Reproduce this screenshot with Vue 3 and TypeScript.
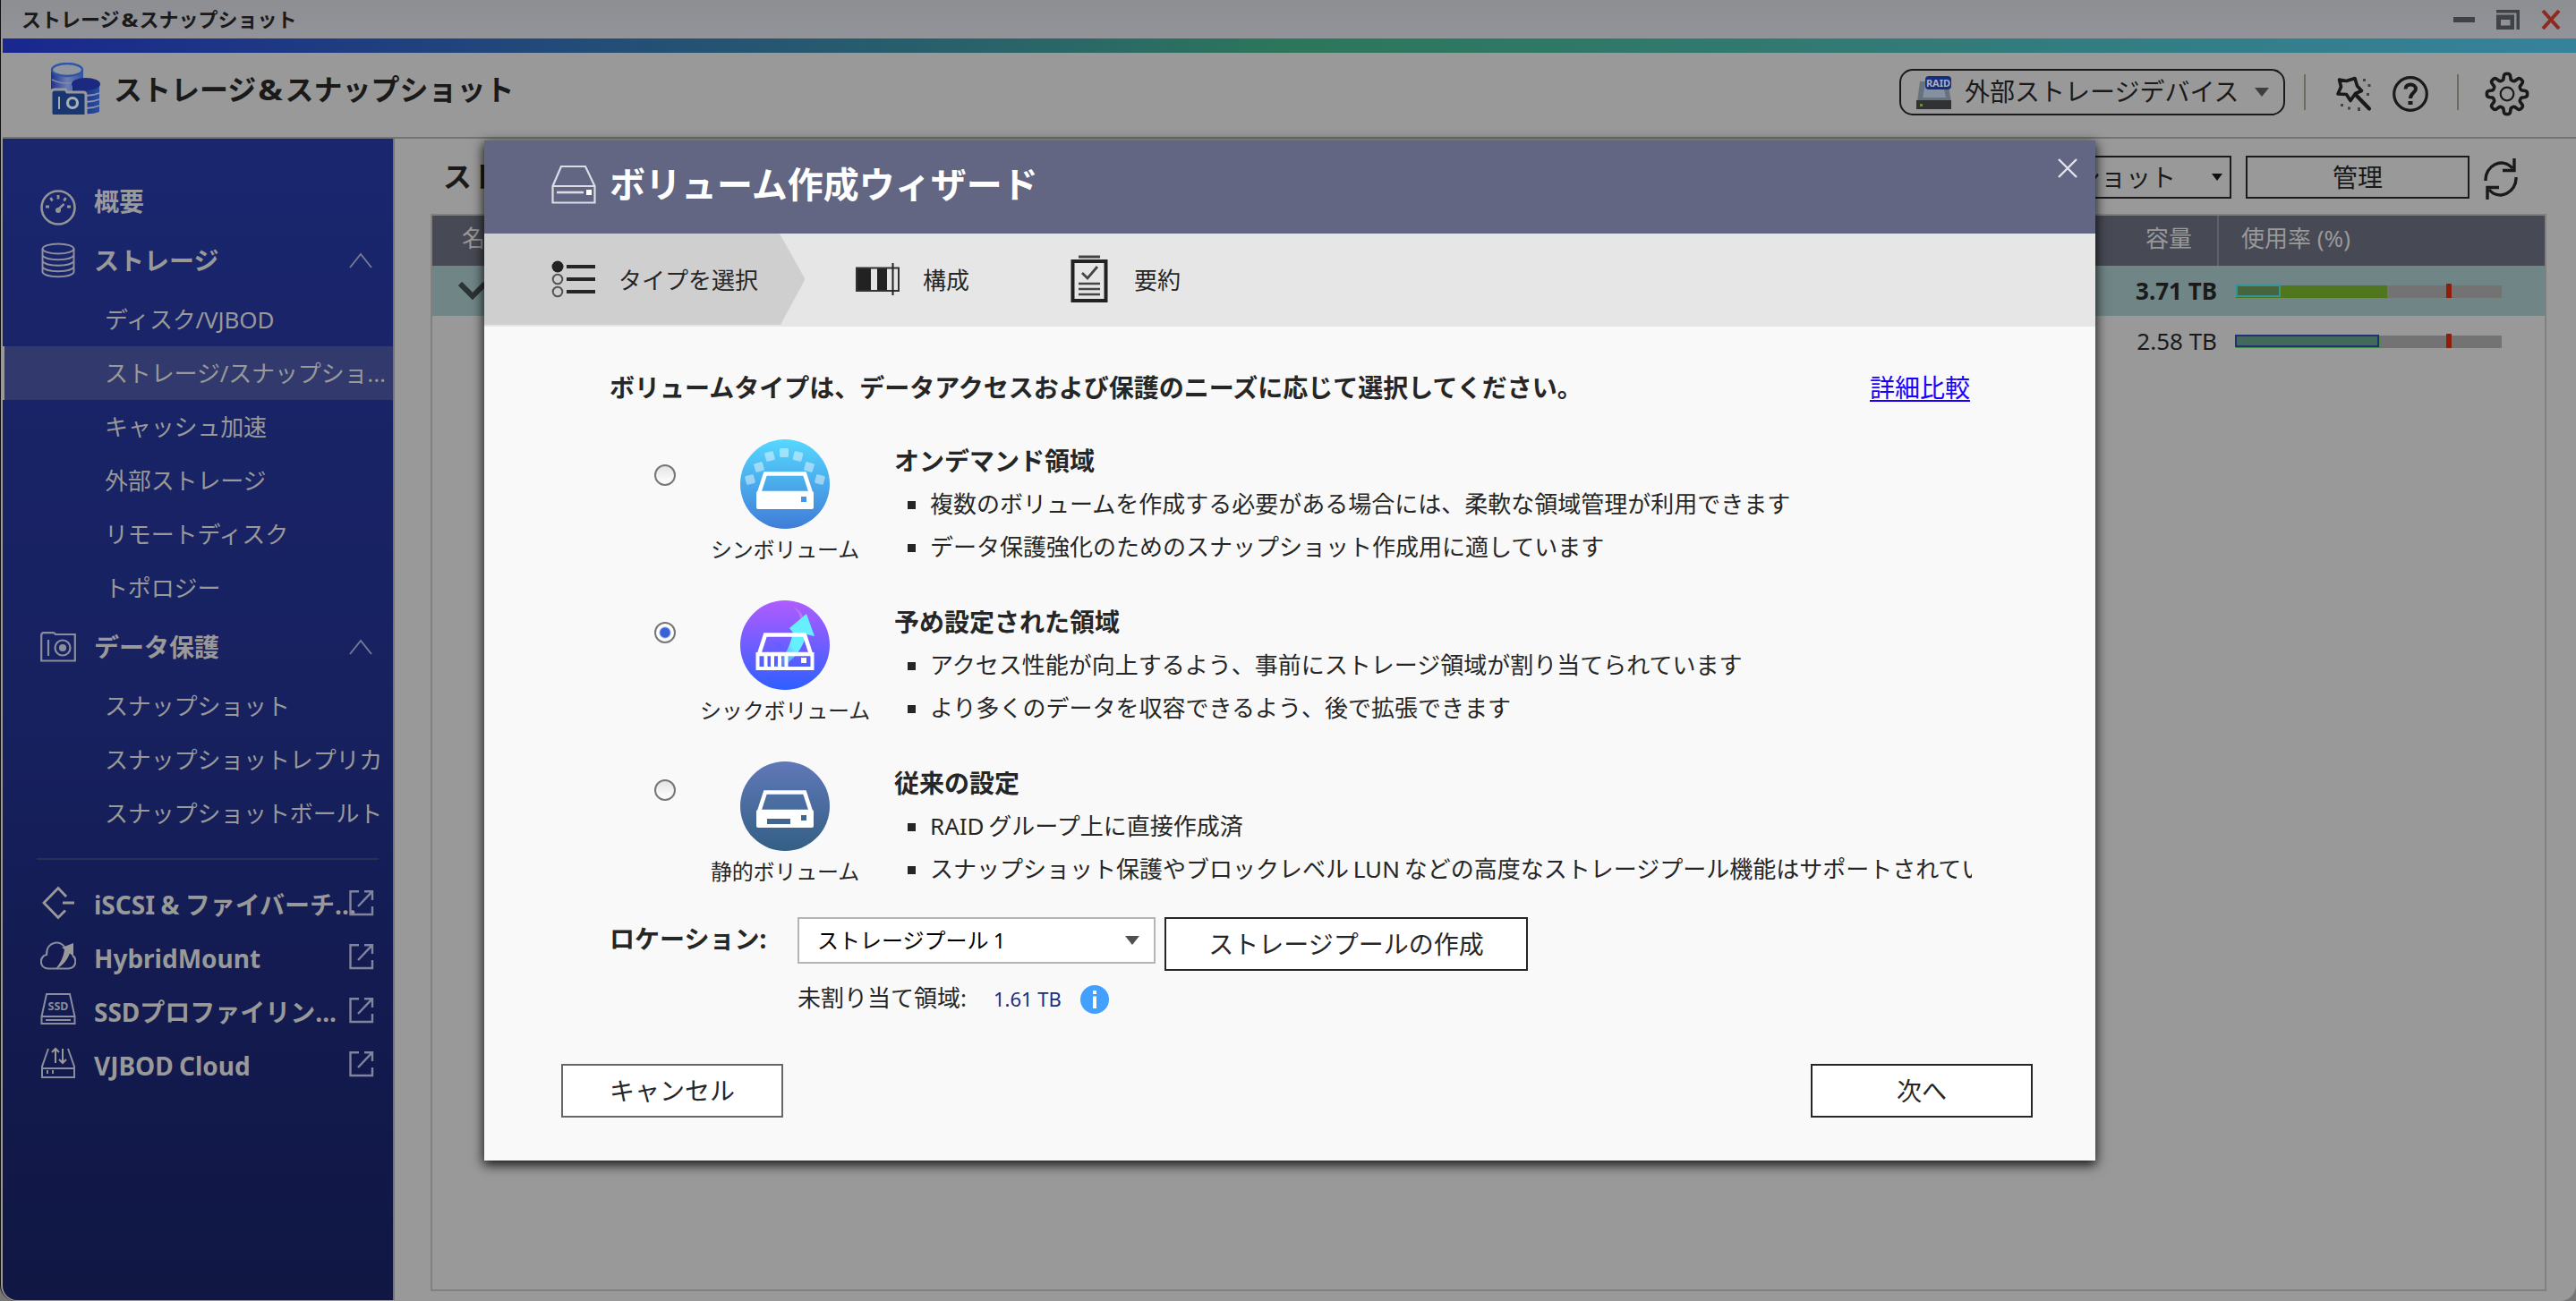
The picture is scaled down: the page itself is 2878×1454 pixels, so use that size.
<script setup lang="ts">
interface SubItem { label: string; active?: boolean }
interface LinkItem { label: string; icon: 'iscsi' | 'hybrid' | 'ssd' | 'vjbod' }
interface VolumeOption {
  kind: 'thin' | 'thick' | 'static'
  label: string
  title: string
  points: string[]
  checked: boolean
}

const storageItems: SubItem[] = [
  { label: 'ディスク/VJBOD' },
  { label: 'ストレージ/スナップショ...', active: true },
  { label: 'キャッシュ加速' },
  { label: '外部ストレージ' },
  { label: 'リモートディスク' },
  { label: 'トポロジー' },
]
const protectItems: SubItem[] = [
  { label: 'スナップショット' },
  { label: 'スナップショットレプリカ' },
  { label: 'スナップショットボールト' },
]
const links: LinkItem[] = [
  { label: 'iSCSI & ファイバーチ...', icon: 'iscsi' },
  { label: 'HybridMount', icon: 'hybrid' },
  { label: 'SSDプロファイリン...', icon: 'ssd' },
  { label: 'VJBOD Cloud', icon: 'vjbod' },
]
const options: VolumeOption[] = [
  {
    kind: 'thin',
    label: 'シンボリューム',
    title: 'オンデマンド領域',
    points: [
      '複数のボリュームを作成する必要がある場合には、柔軟な領域管理が利用できます',
      'データ保護強化のためのスナップショット作成用に適しています',
    ],
    checked: false,
  },
  {
    kind: 'thick',
    label: 'シックボリューム',
    title: '予め設定された領域',
    points: [
      'アクセス性能が向上するよう、事前にストレージ領域が割り当てられています',
      'より多くのデータを収容できるよう、後で拡張できます',
    ],
    checked: true,
  },
  {
    kind: 'static',
    label: '静的ボリューム',
    title: '従来の設定',
    points: [
      'RAID グループ上に直接作成済',
      'スナップショット保護やブロックレベル LUN などの高度なストレージプール機能はサポートされていません',
    ],
    checked: false,
  },
]

function gear(cx: number, cy: number): string {
  const pts: string[] = []
  for (let i = 0; i < 160; i++) {
    const a = (i / 160) * Math.PI * 2
    const c = Math.cos(8 * a)
    const r = 19.3 + 3.3 * Math.tanh(c * 2.2) / Math.tanh(2.2)
    pts.push(`${(cx + r * Math.sin(a)).toFixed(2)} ${(cy - r * Math.cos(a)).toFixed(2)}`)
  }
  return `M${pts.join('L')}Z`
}
const gearPath = gear(25, 25)
// centre x, centre y and tilt of each block in the arc
const dots = [
  [11, 45, -15], [21, 31, -17], [33, 19, -15], [49, 15, 0], [64.5, 19, 15], [77, 31, 17], [89, 45, 15],
]
</script>

<template>
  <div class="window">
    <header class="titlebar">
      <span class="tb-text">ストレージ<span class="amp">&amp;</span>スナップショット</span>
      <span class="tb-ctl">
        <svg width="24" height="22" viewBox="0 0 24 22"><path d="M0 8H24V14H0Z" fill="#3f4347" /></svg>
        <svg width="26" height="22" viewBox="0 0 26 22">
          <path d="M0 0H26V22H22.5V3.5H0Z" fill="#3f4347" /><path d="M0 5.5H20V22H0ZM5 11V17.500H15.500V11Z" fill="#3f4347" fill-rule="evenodd" />
        </svg>
        <svg width="22" height="22" viewBox="0 0 22 22"><path d="M2 1L20 21M20 1L2 21" stroke="#8e2a20" stroke-width="4" /></svg>
      </span>
    </header>
    <div class="rainbow"></div>

    <div class="apphead">
      <svg class="logo" width="56" height="58" viewBox="0 0 56 58">
        <defs>
          <linearGradient id="cyl" x1="0" y1="0" x2="1" y2="0"><stop offset="0" stop-color="#1c3090" /><stop offset=".5" stop-color="#6c7db0" /><stop offset="1" stop-color="#2f52a0" /></linearGradient>
          <linearGradient id="cyl2" x1="0" y1="0" x2="1" y2="0"><stop offset="0" stop-color="#16266f" /><stop offset="1" stop-color="#2b4da0" /></linearGradient>
        </defs>
        <path d="M1 8V32Q18 40 37 32V8Z" fill="url(#cyl)" />
        <path d="M2 19Q18 27 36 19" fill="none" stroke="#7c88b0" stroke-width="1.6" />
        <ellipse cx="19" cy="8" rx="17" ry="7" fill="#8f969f" stroke="#2d57a6" stroke-width="2.4" />
        <path d="M25 24V54Q42 60 55 55V24Z" fill="url(#cyl2)" />
        <ellipse cx="40" cy="24" rx="16" ry="7" fill="#1b2a80" />
        <path d="M40 37Q48 37 55 34M40 44Q48 44 55 41M40 51Q48 51 55 48" fill="none" stroke="#8a94b4" stroke-width="1.8" />
        <path d="M1 57V34Q1 30 5 30H17L19 33H37Q40 33 40 36V58" fill="#173672" stroke="#999" stroke-width="3" />
        <path d="M3 32H16L18 35H37V58H3Z" fill="#173672" />
        <path d="M10 38V52" stroke="#a9a99f" stroke-width="2" />
        <circle cx="25" cy="45" r="5.500" fill="none" stroke="#a9b0b5" stroke-width="3.200" />
      </svg>
      <h1>ストレージ<span class="amp">&amp;</span>スナップショット</h1>
      <div class="pill">
        <svg width="40" height="38" viewBox="0 0 40 38">
          <path d="M4 7H35L39 30H1Z" fill="#68727c" /><path d="M10 10H30L33 25H7Z" fill="#8591a0" />
          <path d="M0 28H39V38H0Z" fill="#303234" /><path d="M4 32H7V35H4Z" fill="#5c9a12" />
          <rect x="10" y="1" width="29" height="15" rx="4" fill="#152f7c" />
          <text x="24.500" y="12.500" font-size="11" font-weight="700" font-family="Noto Sans, sans-serif" text-anchor="middle" fill="#a9b2c4">RAID</text>
        </svg>
        <span>外部ストレージデバイス</span>
        <svg class="caret" width="16" height="10" viewBox="0 0 16 10"><path d="M0 0H16L8 10Z" fill="#3e3e3e" /></svg>
      </div>
      <i class="vsep s1"></i>
      <svg class="wand" width="42" height="42" viewBox="0 0 42 42">
        <path d="M22 3.500L24.500 12L29.500 17.500L22.500 20.500L17 28.500L12.500 21.500L3 21L6.500 13L4.500 5L12.500 6.500Z" fill="none" stroke="#1a1a1a" stroke-width="3.600" stroke-linejoin="round" />
        <path d="M23 22L38 37.500" stroke="#1a1a1a" stroke-width="4.200" stroke-linecap="round" />
        <g fill="#444"><rect x="31" y="4" width="3" height="3" /><rect x="36.500" y="10" width="3" height="3" /><rect x="35" y="20" width="3" height="3" /><rect x="6" y="32" width="3" height="3" /><rect x="14" y="35.500" width="3" height="3" /><rect x="25" y="36" width="3" height="4" /></g>
      </svg>
      <svg class="help" width="40" height="40" viewBox="0 0 40 40">
        <circle cx="20" cy="20" r="18.300" fill="none" stroke="#1a1a1a" stroke-width="3.200" />
        <path d="M14.500 14.500C14.500 7.500 26 8 26 14.500C26 18.500 20 19 20 25" fill="none" stroke="#1a1a1a" stroke-width="4" /><path d="M17.500 28H22.500V32H17.500Z" fill="#1a1a1a" />
      </svg>
      <i class="vsep s2"></i>
      <svg class="gear" width="50" height="50" viewBox="0 0 50 50">
        <path :d="gearPath" fill="none" stroke="#1a1a1a" stroke-width="3.600" stroke-linejoin="round" />
        <circle cx="25" cy="25" r="7.300" fill="none" stroke="#1a1a1a" stroke-width="2.200" />
      </svg>
    </div>

    <div class="main">
      <nav class="side">
        <div class="head top">
          <svg width="40" height="42" viewBox="0 0 40 42" fill="none" stroke="#949494">
            <circle cx="20" cy="21" r="18.500" stroke-width="2.600" />
            <path d="M20 23L26.500 17" stroke-width="2.400" /><circle cx="20" cy="24" r="3" fill="#949494" stroke="none" />
            <g stroke-width="2.800"><path d="M20 7V11.500M11.500 10L13.500 13.500M28.500 10L26.500 13.500M6 20H10M30 20H34" /></g>
          </svg>
          <b>概要</b>
        </div>
        <div class="head">
          <svg width="40" height="40" viewBox="0 0 40 40" fill="none" stroke="#8f9099" stroke-width="2">
            <ellipse cx="20" cy="7" rx="17.500" ry="5.500" /><path d="M2.500 7V33C5 40 35 40 37.500 33V7M2.500 14C5 21 35 21 37.500 14M2.500 20.500C5 27.500 35 27.500 37.500 20.500M2.500 27C5 34 35 34 37.500 27" />
          </svg>
          <b>ストレージ</b>
          <svg class="chev" width="26" height="18" viewBox="0 0 26 18"><path d="M1 17L13 2L25 17" fill="none" stroke="#757994" stroke-width="2" /></svg>
        </div>
        <div v-for="s in storageItems" :key="s.label" class="sub" :class="{ active: s.active }">{{ s.label }}</div>
        <div class="head">
          <svg width="40" height="34" viewBox="0 0 40 34" fill="none" stroke="#8a8d9c" stroke-width="2.200">
            <path d="M1.200 32.500V4Q1.200 1.200 4 1.200H14Q16 1.200 17 3H38.800V32.500Z" /><path d="M9 9V27" /><circle cx="25" cy="18" r="8.500" /><circle cx="25" cy="18" r="3" fill="#8a8d9c" />
          </svg>
          <b>データ保護</b>
          <svg class="chev" width="26" height="18" viewBox="0 0 26 18"><path d="M1 17L13 2L25 17" fill="none" stroke="#757994" stroke-width="2" /></svg>
        </div>
        <div v-for="s in protectItems" :key="s.label" class="sub">{{ s.label }}</div>
        <div class="divider"></div>
        <div v-for="l in links" :key="l.label" class="link">
          <svg width="40" height="40" viewBox="0 0 40 40" fill="none" stroke="#8a8d9c" stroke-width="2">
            <g v-if="l.icon === 'iscsi'" stroke="#999" stroke-width="2.800"><path d="M29 13L20 3.500L4 20L20 36.500L28 28.500M25 20H38" /></g>
            <g v-else-if="l.icon === 'hybrid'">
              <path d="M9 33.500C-2 33 -1 19 7 18C7 2 24 1 28 11M9 33.500H31C41 33 41 22 36 19" stroke-width="2.200" /><path d="M37 5V20L33 16.500C30 24 25 31 17 34C22 28 26 21 27 12L24 10Z" fill="#999" stroke="none" />
            </g>
            <g v-else-if="l.icon === 'ssd'">
              <path d="M7 2H33L38.500 27V35H1.500V27ZM2 27H38M6 31H34" /><text x="20" y="19.500" font-size="12.500" font-weight="700" font-family="Noto Sans, sans-serif" text-anchor="middle" fill="#8a8d9c" stroke="none">SSD</text>
            </g>
            <g v-else>
              <path d="M9 3L2 23V35H38V23L31 3M2 25H38" /><path d="M17 19V3M13 7L17 3L21 7M25 3V19M21 15L25 19L29 15" stroke="#999" /><path d="M7 29H9M13 29H15" stroke-width="4" />
            </g>
          </svg>
          <b>{{ l.label }}</b>
          <svg class="ext" width="28" height="30" viewBox="0 0 28 30" fill="none" stroke="#80849c" stroke-width="2.400"><path d="M11 2.200H1.500V28H26V19M17 2.200H26V12M26 2.200L10 19" /></svg>
        </div>
      </nav>

      <section class="content">
        <div class="toolbar">
          <h2>ストレージ/スナップショット</h2>
          <button class="btn snap">スナップショット<svg width="12" height="8" viewBox="0 0 12 8"><path d="M0 0H12L6 8Z" fill="#111" /></svg></button>
          <button class="btn manage">管理</button>
          <svg class="refresh" width="38" height="46" viewBox="0 0 38 46" fill="none" stroke="#1a1a1a" stroke-width="3.400">
            <path d="M2 25C1 8 21 -2 32 11M34 0V13.500H21M36 21C37 38 17 48 6 35M4 46V32.500H17" />
          </svg>
        </div>
        <div class="table">
          <div class="tr th"><span class="name">名前</span><span class="cap">容量</span><span class="use">使用率 (%)</span></div>
          <div class="tr sel">
            <span class="name"><svg width="32" height="20" viewBox="0 0 32 20"><path d="M2 2L16 16L30 2" fill="none" stroke="#2c3333" stroke-width="6" /></svg></span>
            <span class="cap"><b>3.71 TB</b></span>
            <span class="use"><i class="bar g1"><i class="fill"></i><i class="box"></i><i class="tick"></i></i></span>
          </div>
          <div class="tr">
            <span class="name"></span><span class="cap">2.58 TB</span>
            <span class="use"><i class="bar g2"><i class="fill"></i><i class="box"></i><i class="tick"></i></i></span>
          </div>
        </div>
      </section>
    </div>

    <div class="modal">
      <div class="mhead">
        <svg width="50" height="44" viewBox="0 0 50 44" fill="none" stroke="#dcdde4" stroke-width="2.200">
          <path d="M1.500 24L11 2H38L48.500 24V42.500H1.500ZM1.500 24H48.500" /><path d="M6 31H36" stroke-width="2.600" /><path d="M39 28H45V34H39Z" fill="#fff" stroke="none" />
        </svg>
        <h3>ボリューム作成ウィザード</h3>
        <svg class="x" width="22" height="22" viewBox="0 0 22 22"><path d="M1 1L21 21M21 1L1 21" stroke="#e3e4ea" stroke-width="2.400" /></svg>
      </div>
      <div class="steps">
        <div class="step one">
          <svg width="50" height="42" viewBox="0 0 50 42"><circle cx="7" cy="7" r="6.500" fill="#222" /><g fill="none" stroke="#555" stroke-width="2"><circle cx="7" cy="21" r="5.300" /><circle cx="7" cy="35" r="5.300" /></g><path d="M17 7H49M17 21H49M17 35H49" stroke="#262626" stroke-width="4" /></svg>
          <span>タイプを選択</span>
        </div>
        <svg class="tip" width="30" height="102" viewBox="0 0 30 102"><path d="M0 0L28.500 51L1 102H0Z" fill="#cfcfcf" /></svg>
        <div class="step two">
          <svg width="50" height="36" viewBox="0 0 50 36"><path d="M0 5H17V31H0ZM24 5H35V31H24Z" fill="#222" /><path d="M1 5.500H48V31H1Z" fill="none" stroke="#333" stroke-width="2" /><path d="M41.500 0V36" stroke="#222" stroke-width="2" /></svg>
          <span>構成</span>
        </div>
        <div class="step three">
          <svg width="42" height="54" viewBox="0 0 42 54" fill="none"><path d="M9 2H33" stroke="#444" stroke-width="3" /><path d="M2.500 7H39.500V51H2.500Z" stroke="#222" stroke-width="4" /><path d="M13 20L19 26L30 13" stroke="#444" stroke-width="2.800" /><path d="M9 32H33M9 38H33M9 44H33" stroke="#444" stroke-width="2.500" /></svg>
          <span>要約</span>
        </div>
      </div>
      <div class="mbody">
        <div class="intro">
          <b>ボリュームタイプは、データアクセスおよび保護のニーズに応じて選択してください。</b>
          <a>詳細比較</a>
        </div>
        <div v-for="(o, i) in options" :key="o.kind" class="opt">
          <span class="radio" :class="['r' + i, { on: o.checked }]"></span>
          <div class="pic">
            <svg width="100" height="100" viewBox="0 0 100 100">
              <defs>
                <linearGradient id="gthin" x1="0" y1="0" x2="0" y2="1"><stop offset="0" stop-color="#55d8ff" /><stop offset="1" stop-color="#407dd8" /></linearGradient>
                <linearGradient id="gthick" x1="0" y1="0" x2="0" y2="1"><stop offset="0" stop-color="#b05cff" /><stop offset="1" stop-color="#2f5fff" /></linearGradient>
                <linearGradient id="gstatic" x1="0" y1="0" x2="0" y2="1"><stop offset="0" stop-color="#6078b8" /><stop offset="1" stop-color="#335f85" /></linearGradient>
                <linearGradient id="garrow" x1="1" y1="0" x2="0" y2="1"><stop offset="0.450" stop-color="#66f0ff" /><stop offset="0.900" stop-color="#5a60ff" stop-opacity="0.200" /></linearGradient>
              </defs>
              <circle cx="50" cy="50" r="50" :fill="`url(#g${o.kind})`" />
              <template v-if="o.kind === 'thin'">
                <rect v-for="(d, n) in dots" :key="n" :x="d[0] - 5" :y="d[1] - 5" width="10" height="10" rx="1.500" fill="#fff" fill-opacity=".45" :transform="`rotate(${d[2]} ${d[0]} ${d[1]})`" />
              </template>
              <template v-if="o.kind === 'thick'">
                <path d="M59 7Q72 18 65 35L70 30Q74 14 59 7Z" fill="#d080ff" opacity=".6" />
                <path d="M18 84C42 76 53 62 59 36L55 31L74 15L83 40L74 38C68 60 50 80 18 84Z" fill="url(#garrow)" />
                <path d="M35 46L50 58L44 46Z" fill="#5a60ff" opacity=".6" />
              </template>
              <g :transform="o.kind === 'static' ? 'translate(0 -4)' : ''">
                <path d="M28 38.500H72L79 60H21Z" fill="none" stroke="#fff" stroke-width="4.500" />
                <path v-if="o.kind === 'thick'" d="M19.500 60H80.500V76H19.500Z" fill="none" stroke="#fff" stroke-width="4" />
                <path v-if="o.kind === 'thick'" d="M28.500 62V74M36 62V74M44 62V74M51.500 62V74" stroke="#fff" stroke-width="4" />
                <path v-if="o.kind === 'thick'" d="M68 64H74V70H68Z" fill="#fff" />
                <rect v-if="o.kind !== 'thick'" x="18" y="58" width="64" height="20" rx="2" fill="#fff" />
                <path v-if="o.kind !== 'thick'" d="M68 64H74V70H68Z" :fill="o.kind === 'thin' ? '#4497e0' : '#42658f'" />
                <path v-if="o.kind === 'static'" d="M30 68H56V74H30Z" fill="#42658f" />
              </g>
            </svg>
            <span>{{ o.label }}</span>
          </div>
          <div class="txt">
            <b>{{ o.title }}</b>
            <p v-for="p in o.points" :key="p"><i></i>{{ p }}</p>
          </div>
        </div>
        <div class="loc">
          <b>ロケーション:</b>
          <div class="select"><span>ストレージプール 1</span><svg width="16" height="10" viewBox="0 0 16 10"><path d="M0 0H16L8 10Z" fill="#505050" /></svg></div>
          <button class="mbtn create">ストレージプールの作成</button>
        </div>
        <div class="free">
          <span>未割り当て領域:</span><em>1.61 TB</em>
          <svg width="32" height="32" viewBox="0 0 32 32"><circle cx="16" cy="16" r="16" fill="#42a0ff" /><path d="M14 6H18V10H14ZM14 12.500H18V26H14Z" fill="#fff" /></svg>
        </div>
        <div class="foot">
          <button class="mbtn cancel">キャンセル</button>
          <button class="mbtn next">次へ</button>
        </div>
      </div>
    </div>
  </div>
</template>

<style>
html, body { background: #777; }
</style>

<style scoped>
* { box-sizing: border-box; }
.window {
  position: relative; width: 2878px; height: 1454px; overflow: hidden; display: flex; flex-direction: column;
  padding: 0 0 1px 2px; background: #999; border-left: 1px solid #111; border-radius: 0 0 18px 18px;
  font-family: "Noto Sans", "Noto Sans CJK JP", sans-serif; color: #1a1a1a; font-size: 26px;
}
.window svg { flex: none; display: block; }
h1, h2, h3, p { margin: 0; }
button { font-family: inherit; color: inherit; padding: 0; }
.amp { display: inline-block; width: 1em; text-align: center; transform: scaleX(1.15); }
.titlebar { height: 43px; margin-left: -2px; background: linear-gradient(#8c8e92, #929499); display: flex; justify-content: space-between; padding: 0 17px 0 23px; }
.tb-text { font-size: 22px; font-weight: 700; line-height: 42px; }
.tb-ctl { display: flex; gap: 24px; padding-top: 11px; }
.rainbow { height: 16px; background: linear-gradient(90deg, #19278f, #234b78 22%, #2b6866 42%, #2c775b 50%, #327a74 72%, #35829c); }
.apphead { height: 96px; border-bottom: 2px solid #737373; display: flex; align-items: flex-start; padding-left: 53px; }
.logo { margin-top: 11px; }
h1 { font-size: 32px; line-height: 46px; margin: 18px 0 0 15px; width: 1995px; }
.pill { width: 431px; height: 52px; margin-top: 18px; border: 2px solid #1a1a1a; border-radius: 15px; display: flex; align-items: center; padding-left: 17px; font-size: 28px; }
.pill span { margin-left: 14px; line-height: 44px; margin-bottom: 2px; white-space: nowrap; }
.caret { margin-left: 17px; }
.vsep { width: 2px; height: 40px; margin-top: 24px; background: #6e6a60; }
.s1 { margin-left: 21px; }
.wand { margin: 25px 0 0 33px; }
.help { margin: 26px 0 0 22px; }
.s2 { margin-left: 32px; }
.gear { margin: 21px 0 0 29px; }

.main { flex: 1; display: flex; min-height: 0; }
.side { width: 438px; flex: none; border-right: 2px solid #777; color: #999; background: linear-gradient(#1a266e, #17215f 50%, #131b51 72%, #101743); border-radius: 0 0 0 16px; }
.head { height: 72px; display: flex; align-items: center; padding: 0 23px 0 42px; }
.head b { font-size: 28px; line-height: 40px; margin-left: 20px; }
.head.top { height: 60px; margin-top: 40px; padding-top: 13px; }
.head.top b { margin-top: -13px; }
.chev { margin-left: auto; }
.sub { height: 60px; line-height: 60px; padding-left: 114px; font-size: 26px; letter-spacing: -.15px; white-space: nowrap; overflow: hidden; }
.sub.active { background: #323a6d; border-left: 2px solid #999; padding-left: 112px; }
.divider { height: 2px; background: #2a3055; margin: 20px 16px 18px 38px; }
.link { height: 60px; display: flex; align-items: center; padding: 0 21px 0 42px; white-space: nowrap; }
.link b { font-size: 28px; line-height: 40px; margin: 4px 0 0 20px; width: 285px; word-spacing: -1px; }

.content { flex: 1; padding: 0 33px 10px 40px; display: flex; flex-direction: column; }
.toolbar { height: 84px; display: flex; padding-top: 19px; }
h2 { font-size: 32px; line-height: 48px; margin: -1px 0 0 14px; width: 1698px; }
.btn { height: 48px; border: 2px solid #1a1a1a; background: #999; font-size: 28px; line-height: 42px; border-radius: 0; }
.snap { width: 300px; display: flex; align-items: center; justify-content: flex-end; padding-right: 8px; white-space: nowrap; }
.snap svg { margin-left: 40px; }
.manage { width: 250px; margin-left: 16px; }
.refresh { margin: 3px 0 0 16px; }
.table { flex: 1; border: 2px solid #808080; }
.tr { height: 56px; display: flex; align-items: center; }
.name { width: 1876px; padding-left: 33px; }
.cap { width: 118px; text-align: right; white-space: nowrap; line-height: 56px; }
.use { flex: 1; padding-left: 21px; }
.th { background: #474954; color: #999; line-height: 50px; align-items: flex-start; }
.th .cap { height: 56px; line-height: 50px; padding-right: 28px; border-right: 2px solid #5f616c; width: 120px; }
.th .use { padding-left: 25px; }
.sel { background: #708586; }
.sel .name { padding-left: 29px; }
.bar { position: relative; top: 1px; display: block; width: 297px; height: 14px; background: #737373; }
.bar i { position: absolute; display: block; }
.bar .tick { left: 235px; top: -2px; width: 6px; height: 16px; background: #8f1d0b; }
.g1 .fill { width: 169px; height: 14px; background: #50761e; }
.g1 .box { top: -1px; width: 50px; height: 14px; background: #48643f; border: 2px solid #30959a; }
.g2 .fill { width: 161px; height: 14px; background: #3f8a43; }
.g2 .box { top: -1px; left: -1px; width: 161px; height: 14px; background: #43695a; border: 2px solid #232f78; }

.modal { position: absolute; left: 540px; top: 157px; width: 1800px; height: 1140px; background: #f9f9f9; color: #262626; box-shadow: 0 4px 12px 1px rgba(0, 0, 0, .85); display: flex; flex-direction: column; }
.mhead { height: 104px; background: #626682; display: flex; align-items: flex-start; padding: 0 20px 0 75px; }
.mhead > svg:first-child { margin-top: 27px; }
h3 { font-size: 40px; line-height: 60px; margin: 19px 0 0 15px; color: #fff; }
.mhead .x { margin: 20px 0 0 auto; }
.steps { height: 104px; background: #e6e6e6; display: flex; align-items: flex-start; }
.step { height: 102px; display: flex; align-items: center; }
.step span { line-height: 40px; margin-top: 1px; }
.one { width: 330px; background: #cfcfcf; padding-left: 75px; }
.one span { margin-left: 25px; }
.two { margin-left: 55px; }
.two span { margin-left: 25px; }
.three { margin-left: 113px; }
.three span { margin-left: 29px; }
.mbody { flex: 1; display: flex; flex-direction: column; }
.intro { height: 102px; padding: 46px 140px 0 140px; display: flex; justify-content: space-between; font-size: 28px; line-height: 44px; }
.intro a { color: #1a00ff; text-decoration: underline; text-underline-offset: 3px; }
.opt { height: 180px; display: flex; align-items: flex-start; margin-right: 138px; overflow: hidden; }
.radio { flex: none; width: 24px; height: 24px; border-radius: 50%; border: 2px solid #777; background: linear-gradient(#e4e4e4, #fff); margin-left: 190px; }
.radio.on { background: radial-gradient(circle, #3a62d8 0 5px, #fff 7px); }
.r0 { margin-top: 52px; }
.r1 { margin-top: 48px; }
.r2 { margin-top: 44px; }
.pic { flex: none; width: 240px; margin: 24px 0 0 2px; display: flex; flex-direction: column; align-items: center; font-size: 24px; white-space: nowrap; }
.pic span { line-height: 36px; margin-top: 5px; letter-spacing: -.15px; }
.txt { flex: none; margin-left: 2px; padding-top: 24px; white-space: nowrap; }
.txt b { display: block; font-size: 28px; line-height: 48px; }
.txt p { line-height: 48px; height: 48px; display: flex; align-items: center; word-spacing: -2px; }
.txt i { width: 9px; height: 9px; background: #262626; margin: 3px 16px 0 15px; }
.loc { display: flex; padding: 18px 0 0 140px; align-items: flex-start; height: 84px; }
.loc b { font-size: 28px; line-height: 48px; width: 210px; }
.select { width: 400px; height: 52px; border: 2px solid #b5b5b5; background: #fff; color: #000; font-size: 24px; line-height: 46px; display: flex; align-items: center; justify-content: space-between; padding: 0 16px 0 20px; word-spacing: -1px; }
.mbtn { height: 60px; border: 2px solid #262626; background: #fff; font-size: 28px; line-height: 54px; border-radius: 0; }
.create { width: 406px; margin-left: 10px; }
.free { height: 56px; padding: 0 0 9px 350px; display: flex; align-items: center; line-height: 48px; }
.free em { font-style: normal; font-size: 22px; color: #1a2d80; margin: 3px 21px 0 30px; }
.free svg { margin-top: 5px; }
.foot { display: flex; justify-content: space-between; padding: 42px 70px 0 86px; }
.foot .mbtn { width: 248px; }
.cancel { border-color: #666; }
</style>
